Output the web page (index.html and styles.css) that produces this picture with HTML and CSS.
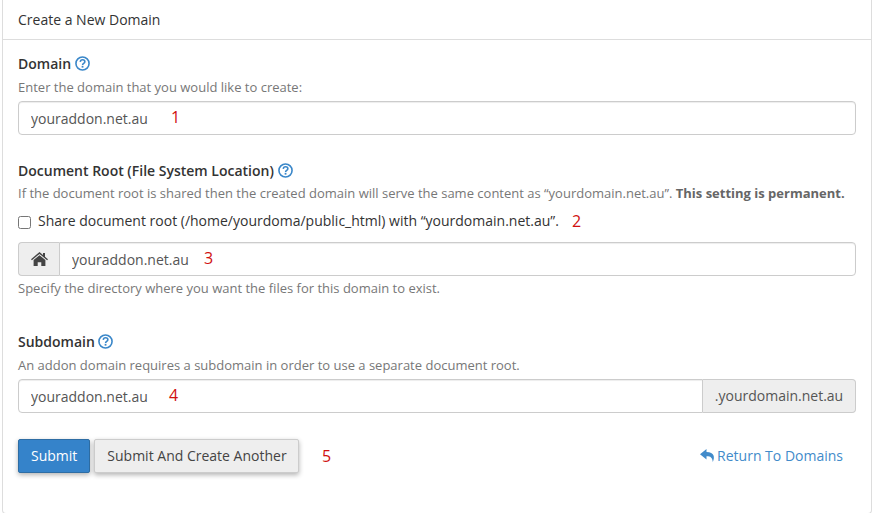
FILE: index.html
```html
<!DOCTYPE html>
<html lang="en">
<head>
    <meta charset="UTF-8">
    <meta name="viewport" content="width=device-width, initial-scale=1.0">
    <title>Create a New Domain</title>
    <link rel="stylesheet" href="styles.css">
</head>
<body>
    <div class="panel">
        <div class="panel-heading">Create a New Domain</div>
        <form class="panel-body">
            <!-- Domain -->
            <div class="form-group group-domain">
                <label class="field-label" for="domain">Domain
                    <svg class="help-icon" viewBox="0 0 16 16"><circle cx="8" cy="8" r="7"/><path d="M5.600 6.300c.1-1.500 1.100-2.300 2.500-2.300 1.400 0 2.400.8 2.400 2 0 1.900-2.400 1.800-2.400 3.500"/><rect class="dot" x="7.100" y="10.500" width="1.900" height="1.900"/></svg>
                </label>
                <p class="help-text">Enter the domain that you would like to create:</p>
                <div class="input-wrap">
                    <input class="text-input" type="text" id="domain" value="youraddon.net.au">
                    <span class="mark mark-1">1</span>
                </div>
            </div>

            <!-- Document root -->
            <div class="form-group group-root">
                <label class="field-label" for="docroot">Document Root (File System Location)
                    <svg class="help-icon" viewBox="0 0 16 16"><circle cx="8" cy="8" r="7"/><path d="M5.600 6.300c.1-1.500 1.100-2.300 2.500-2.300 1.400 0 2.400.8 2.400 2 0 1.900-2.400 1.800-2.400 3.500"/><rect class="dot" x="7.100" y="10.500" width="1.900" height="1.900"/></svg>
                </label>
                <p class="help-text">If the document root is shared then the created domain will serve the same content as “yourdomain.net.au”. <strong>This setting is permanent.</strong></p>
                <div class="check-row">
                    <input class="check" type="checkbox" id="share">
                    <label for="share">Share document root (/home/yourdoma/public_html) with “yourdomain.net.au”.</label>
                    <span class="mark mark-2">2</span>
                </div>
                <div class="input-group input-wrap">
                    <span class="addon addon-left">
                        <svg class="home-icon" viewBox="0 0 17 14"><path d="M8.500 0 0 7.200l.9 1L8.500 1.900l7.600 6.300.9-1-3-2.500V1h-2v2.100z"/><path d="M8.500 3.200 2.600 8.100V14h4.100v-3.800h3.600V14h4.100V8.100z"/></svg>
                    </span>
                    <input class="text-input" type="text" id="docroot" value="youraddon.net.au">
                    <span class="mark mark-3">3</span>
                </div>
                <p class="help-text help-below">Specify the directory where you want the files for this domain to exist.</p>
            </div>

            <!-- Subdomain -->
            <div class="form-group group-sub">
                <label class="field-label" for="subdomain">Subdomain
                    <svg class="help-icon" viewBox="0 0 16 16"><circle cx="8" cy="8" r="7"/><path d="M5.600 6.300c.1-1.500 1.100-2.300 2.500-2.300 1.400 0 2.400.8 2.400 2 0 1.900-2.400 1.800-2.400 3.500"/><rect class="dot" x="7.100" y="10.500" width="1.900" height="1.900"/></svg>
                </label>
                <p class="help-text">An addon domain requires a subdomain in order to use a separate document root.</p>
                <div class="input-group input-wrap">
                    <input class="text-input" type="text" id="subdomain" value="youraddon.net.au">
                    <span class="addon addon-right">.yourdomain.net.au</span>
                    <span class="mark mark-4">4</span>
                </div>
            </div>

            <div class="actions">
                <button class="btn btn-primary" type="button">Submit</button>
                <button class="btn btn-default" type="button">Submit And Create Another</button>
                <span class="mark mark-5">5</span>
                <a class="return-link" href="#">
                    <svg class="return-icon" viewBox="0 0 15 13"><path d="M6.500 0 0 5.200l6.500 5.300V7.300c3.700-.1 5.900.9 6.300 5.700C15 8.500 14.500 3 6.500 3z"/></svg>Return To Domains</a>
            </div>
        </form>
    </div>
</body>
</html>
```

FILE: styles.css
```css
* {
    box-sizing: border-box;
}
body {
    margin: 0;
    background: #fff;
    font-family: "Open Sans", "Liberation Sans", sans-serif;
    font-size: 13px;
    line-height: 18px;
    color: #333;
    overflow: hidden;
}
.panel {
    width: 870px;
    height: 514px;
    margin-left: 2px;
    border: 1px solid #ddd;
    border-top: 0;
    border-radius: 0 0 4px 4px;
}
.panel-heading {
    height: 40px;
    padding: 11px 15px 0;
    border-bottom: 1px solid #ddd;
    font-size: 14px;
    color: #333;
}
.panel-body {
    padding: 14px 15px 0;
}
.form-group {
    margin: 0;
}
.group-root {
    margin-top: 26px;
}
.group-sub {
    margin-top: 35px;
}
.field-label {
    display: block;
    font-size: 14px;
    font-weight: 600;
    height: 18px;
    line-height: 20px;
    color: #333;
}
.help-icon {
    width: 15px;
    height: 15px;
    vertical-align: -2px;
    fill: none;
    stroke: #3a87c9;
    stroke-width: 1.700;
}
.help-icon .dot {
    fill: #3a87c9;
    stroke: none;
}
.help-text {
    margin: 6px 0 5px;
    color: #777;
    line-height: 18px;
}
.group-root .help-text {
    margin-top: 5px;
}
.help-text strong {
    font-weight: 700;
    color: #666;
}
.group-root .help-below {
    margin: 3px 0 0;
}
.input-wrap {
    position: relative;
}
.text-input {
    display: block;
    width: 100%;
    height: 34px;
    padding: 0 12px;
    border: 1px solid #ccc;
    border-radius: 4px;
    background: #fff;
    font-family: inherit;
    font-size: 14px;
    color: #555;
    box-shadow: inset 0 1px 1px rgba(0, 0, 0, 0.075);
}
.check-row {
    position: relative;
    display: flex;
    align-items: center;
    height: 18px;
    margin: 10px 0 12px;
    font-size: 14px;
    color: #333;
}
.check {
    width: 13px;
    height: 13px;
    margin: 3px 7px 0 0;
}
.input-group {
    display: flex;
}
.input-group .text-input {
    flex: 1;
    min-width: 0;
}
.addon {
    display: flex;
    align-items: center;
    justify-content: center;
    height: 34px;
    border: 1px solid #ccc;
    background: #eee;
    font-size: 14px;
    color: #555;
}
.addon-left {
    width: 41px;
    border-right: 0;
    border-radius: 4px 0 0 4px;
}
.addon-left + .text-input {
    border-radius: 0 4px 4px 0;
}
.addon-right {
    width: 153px;
    border-left: 0;
    border-radius: 0 4px 4px 0;
}
.group-sub .text-input {
    border-radius: 4px 0 0 4px;
}
.home-icon {
    width: 17px;
    height: 14px;
    fill: #444;
}
.actions {
    position: relative;
    display: flex;
    align-items: center;
    gap: 4px;
    margin-top: 26px;
}
.btn {
    height: 34px;
    padding: 0 12px 2px;
    border-radius: 2px;
    font-family: inherit;
    font-size: 14px;
    box-shadow: 0 2px 5px rgba(0, 0, 0, 0.3);
}
.btn-primary {
    border: 1px solid #2e6da4;
    background: #3583ca;
    color: #fff;
}
.btn-default {
    padding-right: 11px;
    border: 1px solid #ccc;
    background: #eee;
    color: #444;
}
.return-link {
    margin-left: auto;
    margin-right: 13px;
    color: #428bca;
    font-size: 14px;
    text-decoration: none;
}
.return-icon {
    width: 15px;
    height: 13px;
    margin-right: 2px;
    vertical-align: -1px;
    fill: #428bca;
}
/* red numbers drawn on top of the screenshot */
.mark {
    position: absolute;
    font-family: "Open Sans", sans-serif;
    font-size: 16px;
    color: #d0100f;
}
.mark-1 {
    left: 153px;
    top: 7px;
}
.mark-2 {
    left: 554px;
    top: 0;
}
.mark-3 {
    left: 186px;
    top: 7px;
}
.mark-4 {
    left: 151px;
    top: 7px;
}
.mark-5 {
    left: 304px;
    top: 8px;
}
```
